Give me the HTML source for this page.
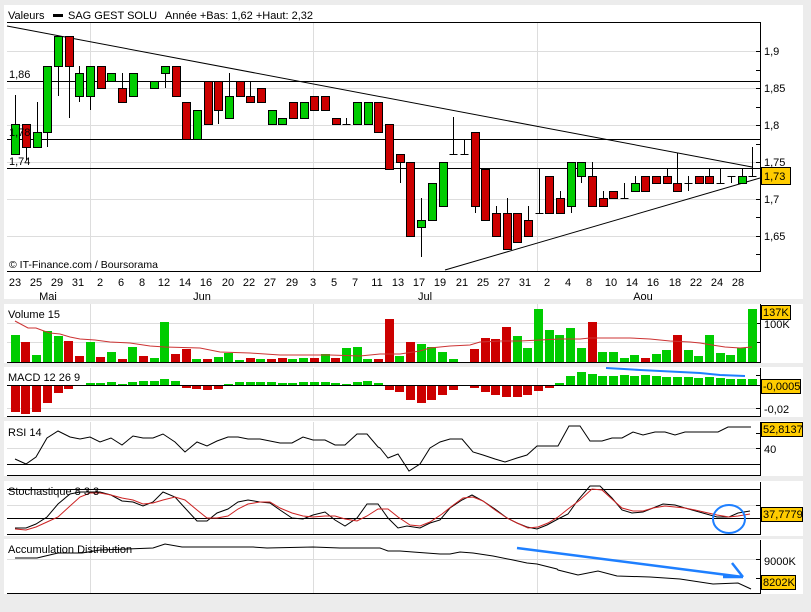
<!DOCTYPE html>
<html><head><meta charset="utf-8">
<style>
html,body{margin:0;padding:0;background:#ececec;}
svg{display:block;font-family:"Liberation Sans",sans-serif;font-size:11px;}
</style></head>
<body>
<svg id="s" width="811" height="612" viewBox="0 0 811 612" xmlns="http://www.w3.org/2000/svg">
<rect x="0" y="0" width="811" height="612" fill="#ececec"/>
<!-- panels -->
<rect x="4" y="5" width="799" height="294" fill="#fff"/>
<rect x="4" y="304" width="799" height="59" fill="#fff"/>
<rect x="4" y="367" width="799" height="50" fill="#fff"/>
<rect x="4" y="421" width="799" height="55" fill="#fff"/>
<rect x="4" y="481" width="799" height="55" fill="#fff"/>
<rect x="4" y="539" width="799" height="55" fill="#fff"/>
<g id="grid" stroke="#dddddd" stroke-width="1" fill="none">
  <path d="M7 51.5H760M7 88.5H760M7 125.5H760M7 162.5H760M7 199.5H760M7 236.5H760"/>
  <path d="M90.5 22V271M313.5 22V271M537.5 22V271"/>
  <path d="M7 323.5H760M7 342.5H760M90.5 304V362M313.5 304V362M537.5 304V362"/>
  <path d="M7 408.5H760M90.5 368V416M313.5 368V416M537.5 368V416"/>
  <path d="M7 448.5H760M90.5 422V475M313.5 422V475M537.5 422V475"/>
  <path d="M7 505.5H760M90.5 482V534M313.5 482V534M537.5 482V534"/>
  <path d="M7 559.5H760M90.5 540V593M313.5 540V593M537.5 540V593"/>
</g>
<g stroke="#000" stroke-width="1" fill="none">
  <path d="M7 22.5H760M7 81.5H760M7 139.5H760M7 168.5H760M7 271.5H760M760.5 22V272"/>
  <path d="M7 362.5H760M760.5 304V363"/>
  <path d="M7 385.5H760M7 416.5H760M760.5 368V417"/>
  <path d="M7 464.5H760M7 475.5H760M760.5 422V476"/>
  <path d="M7 489.5H760M7 518.5H760M7 534.5H760M760.5 482V535"/>
  <path d="M7 593.5H760M760.5 540V594"/>
  <!-- ticks -->
  <path d="M756 51.5h4M756 70.5h4M756 88.5h4M756 107.5h4M756 125.5h4M756 144.5h4M756 162.5h4M756 199.5h4M756 217.5h4M756 236.5h4M756 254.5h4"/>
  <path d="M756 323.5h4M756 342.5h4M756 375.5h4M756 408.5h4M756 433.5h4M756 448.5h4M756 505.5h4M756 559.5h4M756 578.5h4"/>
  <!-- trend lines -->
  <path d="M7 26L752 167"/>
  <path d="M445 270L760 178"/>
</g>
<g id="cand"></g>
<g id="vol"></g>
<g id="macd"></g>
<!-- volume MA -->
<polyline fill="none" stroke="#cc3333" stroke-width="1" points="15,321 28,328 36,328 44,331 50,333 60,334 70,337 80,339 95,340 110,342 130,343 150,346 165,347 200,348 220,352 250,353 280,355 330,355 360,356 380,354 400,354 420,351 430,348 450,346 470,345 480,342 500,341 520,341 540,340 560,339 580,339 590,338 610,338 630,338 650,339 670,341 690,342 700,343 712,345 725,347 740,348 752,347"/>
<!-- MACD blue -->
<polyline fill="none" stroke="#1e7fff" stroke-width="2" points="606,368 624,369 640,370 660,371 680,372 700,373 720,375 745,376"/>
<!-- RSI -->
<polyline fill="none" stroke="#000" stroke-width="1" points="15,459 26,464 36,457 47,438 58,431 70,437 80,439 90,437 100,442 111,438 122,445 133,436 143,438 153,438 163,434 175,442 185,452 197,442 207,446 217,441 228,437 238,437 248,439 260,439 270,441 280,443 292,443 303,437 313,440 325,440 335,445 345,445 357,434 367,434 378,447 380,448 388,458 398,454 409,471 420,464 430,448 440,442 450,439 462,439 473,452 483,455 495,459 505,462 517,458 527,455 537,446 558,446 569,426 580,426 590,441 602,441 612,438 622,438 633,432 643,435 655,432 665,432 675,435 685,432 718,432 728,427 751,427"/>
<!-- Stoch black -->
<polyline fill="none" stroke="#000" stroke-width="1" points="15,528 26,528 36,524 47,517 58,504 70,494 80,492 90,492 100,492 111,495 122,501 133,502 143,506 153,502 163,492 175,497 185,508 197,521 207,521 217,513 228,509 238,502 248,500 260,502 270,503 280,510 292,518 303,519 313,515 325,512 335,520 345,526 357,518 367,504 378,504 388,518 398,528 407,526 420,528 430,523 440,520 450,508 462,500 472,495 483,501 495,509 507,518 517,523 527,527 537,529 547,525 558,519 568,514 578,500 590,486 600,486 612,498 622,510 632,513 643,512 653,508 663,504 675,505 685,508 717,517 729,517 738,513 750,511"/>
<polyline fill="none" stroke="#cc2222" stroke-width="1" points="15,529 26,530 36,527 47,522 58,517 70,506 80,497 90,493 100,493 111,495 122,498 133,500 143,504 153,503 163,500 175,497 185,500 197,510 207,518 217,518 228,516 238,509 248,504 260,502 270,502 280,508 292,513 303,516 313,517 325,516 335,516 345,519 357,521 367,516 378,509 388,509 398,517 410,525 420,526 430,522 442,514 452,506 463,498 473,497 483,501 495,510 507,518 517,523 528,528 538,527 548,523 558,517 568,509 580,500 592,489 602,490 613,500 622,508 633,511 643,511 653,508 665,506 675,507 685,508 695,510 717,515 729,517 738,516 750,514"/>
<ellipse cx="729" cy="519" rx="16" ry="14" fill="none" stroke="#1e7fff" stroke-width="2"/>
<!-- AD -->
<polyline fill="none" stroke="#000" stroke-width="1" points="15,558 37,558 58,553 82,553 100,550 127,549 153,548 165,544 182,547 253,547 267,548 313,547 340,548 360,548 380,548 388,551 400,551 413,552 440,554 450,554 460,552 473,553 493,556 513,560 527,563 537,564 557,569 558,570 578,575 598,571 617,576 650,577 680,579 713,584 738,583 751,589"/>
<path d="M517 548L743 577M732 563L743 577M723 577H743" fill="none" stroke="#1e7fff" stroke-width="2.5"/>
<!-- header text -->
<text x="8" y="19" fill="#000">Valeurs</text>
<rect x="53" y="14" width="10" height="3" fill="#000"/>
<text x="68" y="19" fill="#000">SAG GEST SOLU</text>
<text x="165" y="19" fill="#000">Année +Bas: 1,62 +Haut: 2,32</text>
<text x="9" y="78" fill="#000">1,86</text>
<text x="9" y="136" fill="#000">1,78</text>
<text x="9" y="165" fill="#000">1,74</text>
<text x="9" y="268" fill="#000" font-size="10.5">© IT-Finance.com / Boursorama</text>
<!-- axis labels -->
<g fill="#000">
<text x="764" y="55">1,9</text>
<text x="764" y="92">1,85</text>
<text x="764" y="129">1,8</text>
<text x="764" y="166">1,75</text>
<text x="764" y="203">1,7</text>
<text x="764" y="240">1,65</text>
</g>
<rect x="761.5" y="167.5" width="29" height="17" fill="#ffcc00" stroke="#000"/>
<text x="764" y="180">1,73</text>
<g fill="#000" text-anchor="middle">
<text x="15" y="286">23</text><text x="36" y="286">25</text><text x="57" y="286">29</text><text x="78" y="286">31</text>
<text x="100" y="286">2</text><text x="121" y="286">6</text><text x="142" y="286">8</text><text x="164" y="286">12</text>
<text x="185" y="286">14</text><text x="206" y="286">16</text><text x="228" y="286">20</text><text x="249" y="286">22</text>
<text x="270" y="286">27</text><text x="292" y="286">29</text><text x="313" y="286">3</text><text x="334" y="286">5</text>
<text x="355" y="286">7</text><text x="377" y="286">11</text><text x="398" y="286">13</text><text x="419" y="286">17</text>
<text x="440" y="286">19</text><text x="462" y="286">21</text><text x="483" y="286">25</text><text x="504" y="286">27</text>
<text x="525" y="286">31</text><text x="547" y="286">2</text><text x="568" y="286">4</text><text x="589" y="286">8</text>
<text x="611" y="286">10</text><text x="632" y="286">14</text><text x="653" y="286">16</text><text x="675" y="286">18</text>
<text x="696" y="286">22</text><text x="717" y="286">24</text><text x="738" y="286">28</text>
<text x="48" y="300">Mai</text><text x="202" y="300">Jun</text><text x="425" y="300">Jul</text><text x="643" y="300">Aou</text>
</g>
<text x="8" y="318">Volume 15</text>
<rect x="761.5" y="305.5" width="29" height="14" fill="#ffcc00" stroke="#000"/>
<text x="763" y="316">137K</text>
<text x="764" y="328">100K</text>
<text x="8" y="381">MACD 12 26 9</text>
<rect x="761.5" y="379.5" width="39" height="14" fill="#ffcc00" stroke="#000"/>
<text x="763" y="390">-0,0005</text>
<text x="764" y="413">-0,02</text>
<text x="8" y="436">RSI 14</text>
<rect x="761.5" y="422.5" width="41" height="14" fill="#ffcc00" stroke="#000"/>
<text x="763" y="433">52,8137</text>
<text x="764" y="453">40</text>
<text x="8" y="495">Stochastique 8 3 3</text>
<rect x="761.5" y="507.5" width="41" height="14" fill="#ffcc00" stroke="#000"/>
<text x="763" y="518">37,7779</text>
<text x="8" y="553">Accumulation Distribution</text>
<text x="764" y="565">9000K</text>
<rect x="761.5" y="575.5" width="34" height="14" fill="#ffcc00" stroke="#000"/>
<text x="763" y="586">8202K</text>
</svg>
<script>
(function(){
var NS="http://www.w3.org/2000/svg";
function el(p,t,a){var e=document.createElementNS(NS,t);for(var k in a)e.setAttribute(k,a[k]);p.appendChild(e);return e;}
var C=[["G",124,154,95,154],["R",124,147,124,160],["G",132,147,102,147],["G",66,132,66,147],["G",36,66,36,96],["R",36,66,36,118],["G",73,96,66,102],["G",66,96,66,110],["R",66,88],["G",73,81],
["R",88,102,73,102],["G",73,96],["D",81],["G",81,88],["G",66,73,66,88],["R",66,96],["R",102,139],["G",110,139],["R",81,124],["R",81,110,81,124],
["G",96,118,73,118],["R",81,96],["R",96,102,81,102],["R",88,102],["G",110,124],["G",118,124],["R",102,118],["G",102,118],["R",96,110],["R",96,110],
["R",118,124],["D",124,118,124],["G",102,124],["G",102,124],["R",102,132],["R",124,169],["R",154,162,154,183],["R",162,236],["G",220,227,198,257],["G",183,220],
["G",162,206],["D",154,117,154],["D",154,139,154],["R",132,206,132,213],["R",169,220],["R",213,236,206,236],["R",213,249,198,249],["R",213,242],["R",220,236,206,236],["D",213,168,213],
["R",176,213],["R",198,213,191,213],["G",162,206,162,213],["G",162,176,162,183],["R",176,206,162,206],["R",198,206,191,206],["R",191,198],["D",198,183,198],["G",183,191,176,191],["R",176,191],
["R",176,183],["R",176,183,169,183],["R",183,191,153,191],["D",183,176,191],["R",176,183],["R",176,183,169,183],["D",183,169,183],["D",176,176,183],["G",176,183,169,183],["D",176,147,176]];
var g=document.getElementById("cand");
for(var i=0;i<C.length;i++){
 var c=C[i],x=Math.round(15.3+10.68*i)+0.5;
 if(c[0]=="D"){
  var hi=c.length>2?c[2]:c[1],lo=c.length>3?c[3]:c[1];
  if(hi!=lo) el(g,"line",{x1:x,x2:x,y1:hi,y2:lo,stroke:"#000"});
  el(g,"line",{x1:x-4,x2:x+4,y1:c[1]+0.5,y2:c[1]+0.5,stroke:"#000"});
 } else {
  var hi=c.length>3?c[3]:c[1],lo=c.length>4?c[4]:c[2];
  if(hi<c[1]||lo>c[2]) el(g,"line",{x1:x,x2:x,y1:hi,y2:lo,stroke:"#000"});
  el(g,"rect",{x:x-4,y:c[1]+0.5,width:8,height:c[2]-c[1],fill:c[0]=="G"?"#00cc00":"#cc0000",stroke:"#000"});
 }
}
var V=[335,342,355,331,336,341,356,342,357,352,359,347,356,358,322,354,349,359,359,357,353,360,358,359,359,358,359,358,358,354,358,348,347,359,359,319,356,342,344,347,352,359,null,349,338,339,327,336,348,309,330,335,328,348,322,352,352,358,355,358,354,350,335,350,356,335,353,355,348,309];
var VC="GRGGGRRGRGRGRGGRRGRGGGRGRRGGRGRGGGRR"+"GRGGGG"+"X"+"RRRRGGGGGGGRGGGGRGGRGGGGGGG";
var gv=document.getElementById("vol");
for(var i=0;i<V.length;i++){if(V[i]==null)continue;var x=15.3+10.68*i;
 el(gv,"rect",{x:Math.round(x-4.5),y:V[i],width:9,height:362-V[i],fill:VC[i]=="R"?"#cc0000":"#00cc00"});}
var M=[411,413,411,402,392,388,385,383,383,382,384,382,381,381,379,381,387,388,389,388,384,382,382,382,382,383,383,382,382,382,383,384,382,381,383,389,391,399,402,399,394,389,385,387,391,394,396,396,394,390,387,383,376,372,374,376,376,375,376,375,376,377,377,377,378,377,378,379,379,379];
var gm=document.getElementById("macd");
for(var i=0;i<M.length;i++){var x=Math.round(15.3+10.68*i-4.5);
 if(M[i]>385) el(gm,"rect",{x:x,y:386,width:9,height:M[i]-385,fill:"#cc0000"});
 else if(M[i]<385) el(gm,"rect",{x:x,y:M[i],width:9,height:385-M[i],fill:"#00cc00"});}
})();
</script>
</body></html>
